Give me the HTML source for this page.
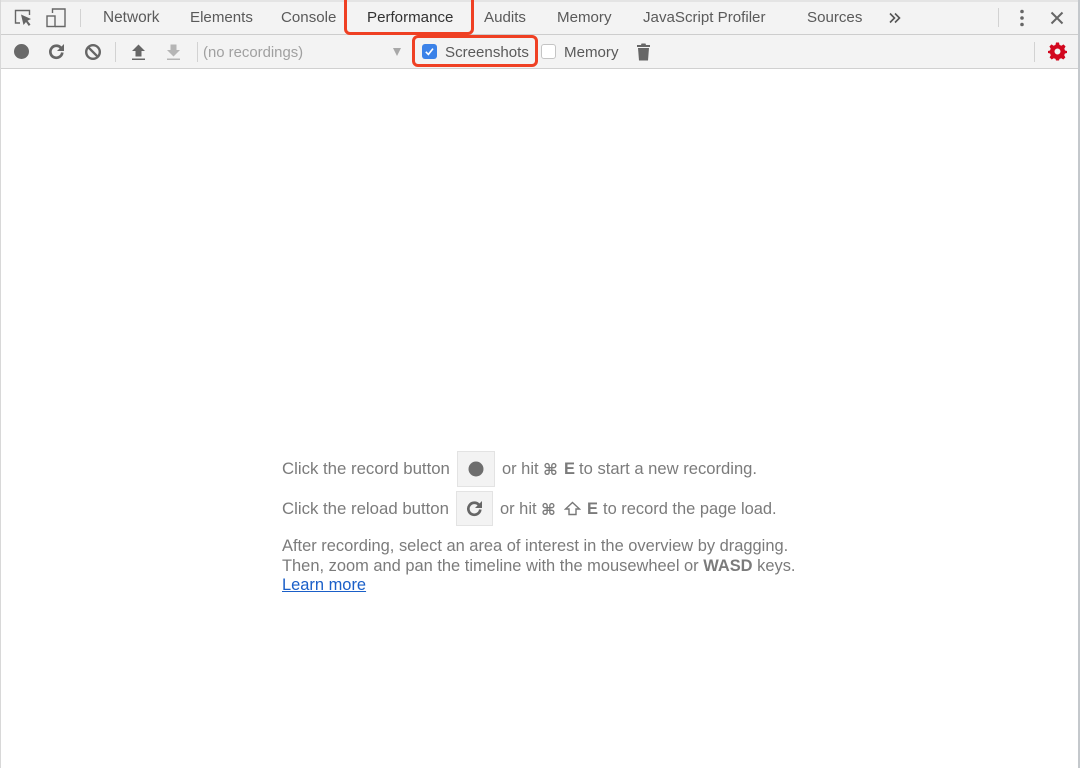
<!DOCTYPE html>
<html><head><meta charset="utf-8">
<style>
html,body{margin:0;padding:0;background:#fff}
#r{position:relative;width:1080px;height:768px;overflow:hidden;background:#fff;font-family:"Liberation Sans","DejaVu Sans",sans-serif;font-size:15.1px;color:#5a5a5a;filter:blur(.3px)}
#r div,#r svg{position:absolute}
.t{white-space:nowrap;line-height:18px}
.g{color:#7b7b7b;font-size:16.45px}
.k{font-family:"DejaVu Sans",sans-serif;font-size:16px;font-weight:bold;color:#7b7b7b}
.sep{width:1px;background:#d2d2d2}
b{font-weight:bold}
</style></head><body><div id="r">
<div style="left:0;top:0;width:1080px;height:2px;background:#e4e4e4"></div>
<div style="left:0;top:2px;width:1080px;height:32px;background:#f3f3f3"></div>
<div style="left:0;top:34px;width:1080px;height:1px;background:#cdcdcd"></div>
<div style="left:0;top:35px;width:1080px;height:33px;background:#f3f3f3"></div>
<div style="left:0;top:68px;width:1080px;height:1px;background:#d0d0d0"></div>
<div style="left:0;top:0;width:1px;height:768px;background:#d8d8d8"></div>
<div style="left:1078px;top:0;width:2px;height:768px;background:#c4c8cc"></div>

<svg style="left:13px;top:8px" width="20" height="20" viewBox="0 0 20 20" fill="none"><path d="M7 15H2.5V2.5H16.5V7" stroke="#666" stroke-width="1.4"/><path d="M8 6.5L18 11L14.5 12.7L17.5 16.5L15.8 18L13 14L10.5 17Z" fill="#666"/></svg>
<svg style="left:45px;top:7px" width="22" height="22" viewBox="0 0 22 22" fill="none"><path d="M7.5 6V2H20V19.5H10" stroke="#666" stroke-width="1.4"/><rect x="2" y="9" width="8" height="10.5" stroke="#666" stroke-width="1.4"/></svg>
<div class="sep" style="left:80px;top:9px;height:18px"></div>

<div class="t" style="left:103px;top:9px;font-size:15.4px">Network</div>
<div class="t" style="left:190px;top:9px">Elements</div>
<div class="t" style="left:281px;top:9px">Console</div>
<div class="t" style="left:367px;top:9px;color:#333">Performance</div>
<div class="t" style="left:484px;top:9px">Audits</div>
<div class="t" style="left:557px;top:9px">Memory</div>
<div class="t" style="left:643px;top:9px">JavaScript Profiler</div>
<div class="t" style="left:807px;top:9px">Sources</div>
<svg style="left:888px;top:11px" width="14" height="14" viewBox="0 0 14 14" fill="none" stroke="#555" stroke-width="1.6"><path d="M2 2.5L6.5 7L2 11.5M7 2.5L11.5 7L7 11.5"/></svg>
<div class="sep" style="left:998px;top:8px;height:19px"></div>
<svg style="left:1018px;top:9px" width="8" height="18" viewBox="0 0 8 18" fill="#666"><circle cx="4" cy="2.5" r="1.8"/><circle cx="4" cy="9" r="1.8"/><circle cx="4" cy="15.5" r="1.8"/></svg>
<svg style="left:1050px;top:11px" width="14" height="14" viewBox="0 0 14 14" stroke="#666" stroke-width="2"><path d="M1.5 1.5L12.5 12.5M12.5 1.5L1.5 12.5"/></svg>

<svg style="left:13px;top:43px" width="17" height="17" viewBox="0 0 17 17"><circle cx="8.5" cy="8.5" r="7.5" fill="#696969"/></svg>
<svg style="left:48px;top:43px" width="17" height="17" viewBox="0 0 17 17" fill="none"><path d="M13 5A6 6 0 1 0 14.3 9.5" stroke="#666" stroke-width="2.7"/><path d="M16 1V8H9Z" fill="#666"/></svg>
<svg style="left:84px;top:43px" width="18" height="18" viewBox="0 0 18 18" fill="none" stroke="#666" stroke-width="2.4"><circle cx="9" cy="9" r="6.8"/><path d="M4.2 4.2L13.8 13.8"/></svg>
<div class="sep" style="left:115px;top:42px;height:20px"></div>
<svg style="left:131px;top:44px" width="15" height="17" viewBox="0 0 15 17" fill="#666"><path d="M7.5 0.5L14 7H10.5V12.5H4.5V7H1Z"/><rect x="1" y="14.5" width="13" height="1.5"/></svg>
<svg style="left:166px;top:44px" width="15" height="17" viewBox="0 0 15 17" fill="#b5b5b5"><path d="M7.5 12.5L14 6H10.5V0.5H4.5V6H1Z"/><rect x="1" y="14.5" width="13" height="1.5"/></svg>
<div class="sep" style="left:197px;top:42px;height:20px"></div>
<div class="t" style="left:203px;top:44px;color:#a0a0a0;font-size:14.9px">(no recordings)</div>
<svg style="left:392px;top:47px" width="10" height="10" viewBox="0 0 10 10" fill="#a8a8a8"><path d="M1 1H9L5 9Z"/></svg>

<div style="left:422px;top:44px;width:15px;height:15px;border-radius:3px;background:#3b82e8"></div>
<svg style="left:422px;top:44px" width="15" height="15" viewBox="0 0 15 15" fill="none" stroke="#fff" stroke-width="1.6"><path d="M3.8 7.8L6.4 10.4L11 4.6"/></svg>
<div class="t" style="left:445px;top:44px">Screenshots</div>
<div style="left:541px;top:44px;width:13px;height:13px;border-radius:3px;background:#fff;border:1px solid #c4c4c4"></div>
<div class="t" style="left:564px;top:44px">Memory</div>
<svg style="left:637px;top:43px" width="13" height="18" viewBox="0 0 13 18" fill="#666"><path d="M4.5 0.5H8.5L9 2H13V4H0V2H4Z"/><path d="M1 5H12L11 17.5H2Z"/></svg>
<div class="sep" style="left:1034px;top:42px;height:20px"></div>
<svg style="left:1048px;top:42px" width="19" height="19" viewBox="0 0 19 19"><path fill="#d2071e" fill-rule="evenodd" d="M8 1H11L11.5 3.4L13.4 4.2L15.5 2.9L17.6 5L16.3 7.1L17 9L19 9.5V11.5L16.9 12L16.2 13.8L17.4 15.9L15.3 18L13.3 16.7L11.5 17.4L11 19H8L7.5 17.4L5.7 16.7L3.7 18L1.6 15.9L2.8 13.8L2.1 12L0 11.5V9.5L2 9L2.7 7.1L1.4 5L3.5 2.9L5.6 4.2L7.5 3.4ZM9.5 7A3 3 0 1 0 9.5 13A3 3 0 1 0 9.5 7Z" transform="translate(0 -0.5)"/></svg>

<div style="left:344px;top:-6px;width:124px;height:35px;border:3px solid #ef4023;border-radius:6px"></div>
<div style="left:412px;top:35px;width:120px;height:26px;border:3px solid #ef4023;border-radius:6px"></div>

<div class="t g" style="left:282px;top:460px;font-size:16.8px">Click the record button</div>
<div style="left:457px;top:451px;width:36px;height:34px;background:#f3f3f3;border:1px solid #e3e3e3"></div>
<svg style="left:468px;top:461px" width="16" height="16" viewBox="0 0 16 16"><circle cx="8" cy="8" r="7.5" fill="#6e6e6e"/></svg>
<div class="t g" style="left:502px;top:460px">or hit</div>
<div class="t k" style="left:543px;top:461px">⌘</div>
<div class="t g" style="left:564px;top:460px"><b>E</b></div>
<div class="t g" style="left:579px;top:460px;font-size:16.6px">to start a new recording.</div>

<div class="t g" style="left:282px;top:500px;font-size:16.8px">Click the reload button</div>
<div style="left:456px;top:491px;width:35px;height:33px;background:#f3f3f3;border:1px solid #e3e3e3"></div>
<svg style="left:466px;top:500px" width="17" height="17" viewBox="0 0 17 17" fill="none"><path d="M13 5A6 6 0 1 0 14.3 9.5" stroke="#666" stroke-width="2.7"/><path d="M16 1V8H9Z" fill="#666"/></svg>
<div class="t g" style="left:500px;top:500px">or hit</div>
<div class="t k" style="left:541px;top:501px">⌘</div>
<svg style="left:564px;top:501px" width="17" height="15" viewBox="0 0 17 15" fill="none" stroke="#777" stroke-width="1.4"><path d="M8.5 1.5L15.5 8H12V13.5H5V8H1.5Z"/></svg>
<div class="t g" style="left:587px;top:500px"><b>E</b></div>
<div class="t g" style="left:603px;top:500px">to record the page load.</div>

<div class="t g" style="left:282px;top:537px">After recording, select an area of interest in the overview by dragging.</div>
<div class="t g" style="left:282px;top:557px">Then, zoom and pan the timeline with the mousewheel or <b>WASD</b> keys.</div>
<div class="t" style="left:282px;top:576px;font-size:16.45px;color:#1a5fc8;text-decoration:underline">Learn more</div>
</div></body></html>
